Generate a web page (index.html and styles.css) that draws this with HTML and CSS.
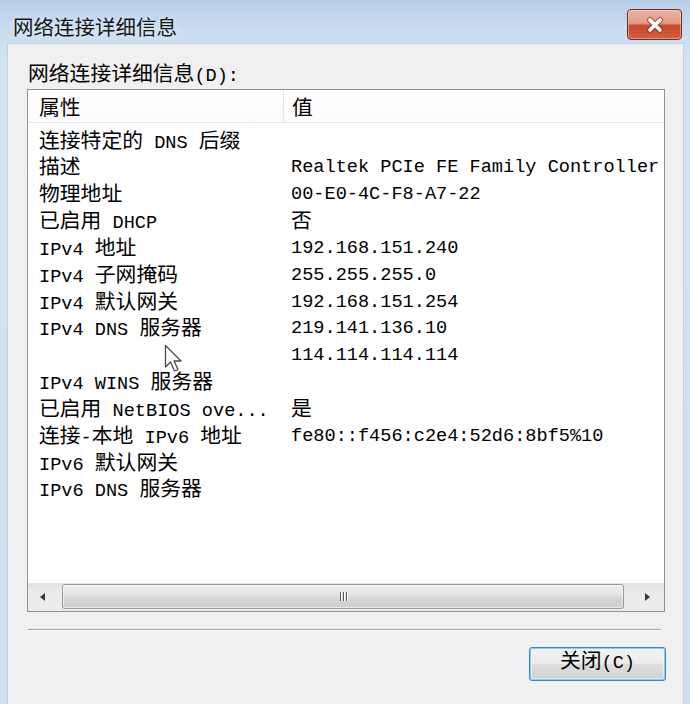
FILE: index.html
```html
<!DOCTYPE html>
<html lang="zh-CN">
<head>
<meta charset="utf-8">
<title>网络连接详细信息</title>
<link rel="stylesheet" href="styles.css">
</head>
<body>
<div class="frame">
  <div class="titlebar">
    <span class="title">网络连接详细信息</span>
    <button class="close" aria-label="关闭">
      <svg width="22" height="18" viewBox="0 0 22 18">
        <path d="M6 4 L16 14 M16 4 L6 14" stroke="#6e2a1f" stroke-width="6" stroke-linecap="round" opacity="0.55"/>
        <path d="M6 4 L16 14 M16 4 L6 14" stroke="#ffffff" stroke-width="3.6" stroke-linecap="round"/>
      </svg>
    </button>
  </div>
  <div class="panel">
    <div class="label"><span class="c">网络连接详细信息</span>(D):</div>
    <div class="listbox">
      <div class="header">
        <div class="hcell hname"><span class="c">属性</span></div>
        <div class="hcell hval"><span class="c">值</span></div>
      </div>
      <div class="rows">
        <div class="row"><div class="name"><span class="c">连接特定的</span> DNS <span class="c">后缀</span></div><div class="val"></div></div>
        <div class="row"><div class="name"><span class="c">描述</span></div><div class="val">Realtek PCIe FE Family Controller</div></div>
        <div class="row"><div class="name"><span class="c">物理地址</span></div><div class="val">00-E0-4C-F8-A7-22</div></div>
        <div class="row"><div class="name"><span class="c">已启用</span> DHCP</div><div class="val"><span class="c">否</span></div></div>
        <div class="row"><div class="name">IPv4 <span class="c">地址</span></div><div class="val">192.168.151.240</div></div>
        <div class="row"><div class="name">IPv4 <span class="c">子网掩码</span></div><div class="val">255.255.255.0</div></div>
        <div class="row"><div class="name">IPv4 <span class="c">默认网关</span></div><div class="val">192.168.151.254</div></div>
        <div class="row"><div class="name">IPv4 DNS <span class="c">服务器</span></div><div class="val">219.141.136.10</div></div>
        <div class="row"><div class="name"></div><div class="val">114.114.114.114</div></div>
        <div class="row"><div class="name">IPv4 WINS <span class="c">服务器</span></div><div class="val"></div></div>
        <div class="row"><div class="name"><span class="c">已启用</span> NetBIOS ove...</div><div class="val"><span class="c">是</span></div></div>
        <div class="row"><div class="name"><span class="c">连接</span>-<span class="c">本地</span> IPv6 <span class="c">地址</span></div><div class="val">fe80::f456:c2e4:52d6:8bf5%10</div></div>
        <div class="row"><div class="name">IPv6 <span class="c">默认网关</span></div><div class="val"></div></div>
        <div class="row"><div class="name">IPv6 DNS <span class="c">服务器</span></div><div class="val"></div></div>
      </div>
      <div class="hscroll">
        <div class="sbtn"><span class="arrow-left"></span></div>
        <div class="thumb"><span class="grip"><i></i><i></i><i></i></span></div>
        <div class="track-rest"></div>
        <div class="sbtn"><span class="arrow-right"></span></div>
      </div>
    </div>
    <div class="sep"></div>
    <div class="actions">
      <button class="btn"><span class="c">关闭</span>(C)</button>
    </div>
  </div>
</div>
<svg class="cursor" width="20" height="30" viewBox="0 0 20 30">
  <path d="M1.5 1.5 L1.5 23 L6.5 18 L10.5 27 L14 25.5 L10 17 L17 17 Z" fill="#ffffff" stroke="#4a4a4a" stroke-width="1.3" stroke-linejoin="round"/>
</svg>
</body>
</html>
```

FILE: styles.css
```css
html, body {
  margin: 0;
  padding: 0;
}

body {
  width: 690px;
  height: 704px;
  overflow: hidden;
  position: relative;
  background: linear-gradient(to bottom, #b7cfe9 0px, #c9dcf0 30px, #d3e3f3 60px, #cfdff1 704px);
  font-family: "Liberation Mono", "Noto Sans CJK SC", monospace;
  font-size: 18.6px;
  color: #000;
}

.frame {
  display: flex;
  flex-direction: column;
  height: 704px;
}

.titlebar {
  height: 43px;
  flex: none;
  display: flex;
  justify-content: space-between;
  align-items: flex-start;
  padding: 0 8px 0 13px;
  box-sizing: border-box;
}

.title {
  font-family: "Noto Sans CJK SC", sans-serif;
  font-size: 20.5px;
  line-height: 24px;
  margin-top: 14px;
  color: #151515;
  text-shadow: 0 0 6px rgba(255, 255, 255, 0.7);
}

.close {
  width: 55px;
  height: 31px;
  margin-top: 9px;
  padding: 0;
  border: 1px solid #6d3329;
  border-radius: 4px;
  background: linear-gradient(to bottom, #eeb3a4 0%, #e39a86 46%, #c8472c 54%, #d4603f 100%);
  box-shadow: inset 0 0 0 1px rgba(255, 220, 210, 0.45);
  display: flex;
  align-items: center;
  justify-content: center;
}

.close svg {
  display: block;
}

.panel {
  flex: 1;
  margin: 0 6px 0 7px;
  border: 1px solid #c3d1e1;
  border-bottom: none;
  background: #f0f0f0;
  box-sizing: border-box;
  padding: 18px 18px 0 19px;
}

.c {
  font-family: "Noto Sans CJK SC", sans-serif;
  font-size: 20.8px;
  line-height: 20px;
}

.label {
  height: 22px;
  line-height: 22px;
  white-space: nowrap;
  padding-left: 1px;
}

.listbox {
  margin-top: 5px;
  height: 523px;
  border: 1px solid #8c949e;
  background: #ffffff;
  box-sizing: border-box;
  display: flex;
  flex-direction: column;
}

.header {
  height: 33px;
  flex: none;
  display: flex;
  border-bottom: 1px solid #e2e4e7;
  box-sizing: border-box;
  background: linear-gradient(to bottom, #ffffff, #fbfbfc);
}

.hcell {
  display: flex;
  align-items: center;
  line-height: 26px;
  box-sizing: border-box;
}

.hname {
  width: 256px;
  padding-left: 11px;
  border-right: 1px solid #e3e5e8;
}

.hval {
  padding-left: 8px;
}

.rows {
  flex: 1;
  padding-top: 5.5px;
  box-sizing: border-box;
}

.row {
  display: flex;
  height: 26.85px;
  line-height: 26.85px;
}

.name {
  width: 256px;
  flex: none;
  padding-left: 11px;
  box-sizing: border-box;
  white-space: nowrap;
}

.val {
  flex: 1;
  padding-left: 7px;
  white-space: nowrap;
}

.hscroll {
  height: 28px;
  flex: none;
  display: flex;
  background: linear-gradient(to bottom, #e2e2e2, #ececec 40%, #ebebeb);
}

.sbtn {
  width: 34px;
  flex: none;
  display: flex;
  align-items: center;
  justify-content: center;
}

.arrow-left {
  width: 0;
  height: 0;
  border-top: 4.5px solid transparent;
  border-bottom: 4.5px solid transparent;
  border-right: 5px solid #3a3a3a;
  margin-right: 6px;
}

.arrow-right {
  width: 0;
  height: 0;
  border-top: 4.5px solid transparent;
  border-bottom: 4.5px solid transparent;
  border-left: 5px solid #3a3a3a;
}

.thumb {
  width: 562px;
  flex: none;
  margin: 1px 0 2px;
  border: 1px solid #999999;
  border-radius: 3px;
  box-sizing: border-box;
  background: linear-gradient(to bottom, #f0f0f0 0%, #e4e4e4 45%, #d6d6d6 55%, #cfcfcf 100%);
  box-shadow: inset 0 0 0 1px rgba(255, 255, 255, 0.55);
  display: flex;
  align-items: center;
  justify-content: center;
}

.grip {
  display: flex;
  gap: 2px;
}

.grip i {
  width: 1px;
  height: 9px;
  background: #5a5a5a;
  box-shadow: 1px 0 0 #ffffff;
}

.track-rest {
  flex: 1;
}

.sep {
  margin: 17px 4px 0 1px;
  height: 1px;
  background: #a0a0a0;
  border-bottom: 1px solid #ffffff;
}

.actions {
  display: flex;
  justify-content: flex-end;
  margin-top: 16px;
  margin-right: -1px;
}

.btn {
  width: 137px;
  height: 34px;
  padding: 0;
  border: 1px solid #3a86c4;
  border-radius: 3px;
  background: linear-gradient(to bottom, #f2f2f2 0%, #ebebeb 48%, #dddddd 52%, #d2d2d2 100%);
  box-shadow: inset 0 0 0 1px #7fd0f2, inset 0 0 0 2px rgba(255, 255, 255, 0.45);
  font-family: "Liberation Mono", "Noto Sans CJK SC", monospace;
  font-size: 18.6px;
  color: #000;
  line-height: 30px;
}

.cursor {
  position: absolute;
  left: 164px;
  top: 344px;
}
```
